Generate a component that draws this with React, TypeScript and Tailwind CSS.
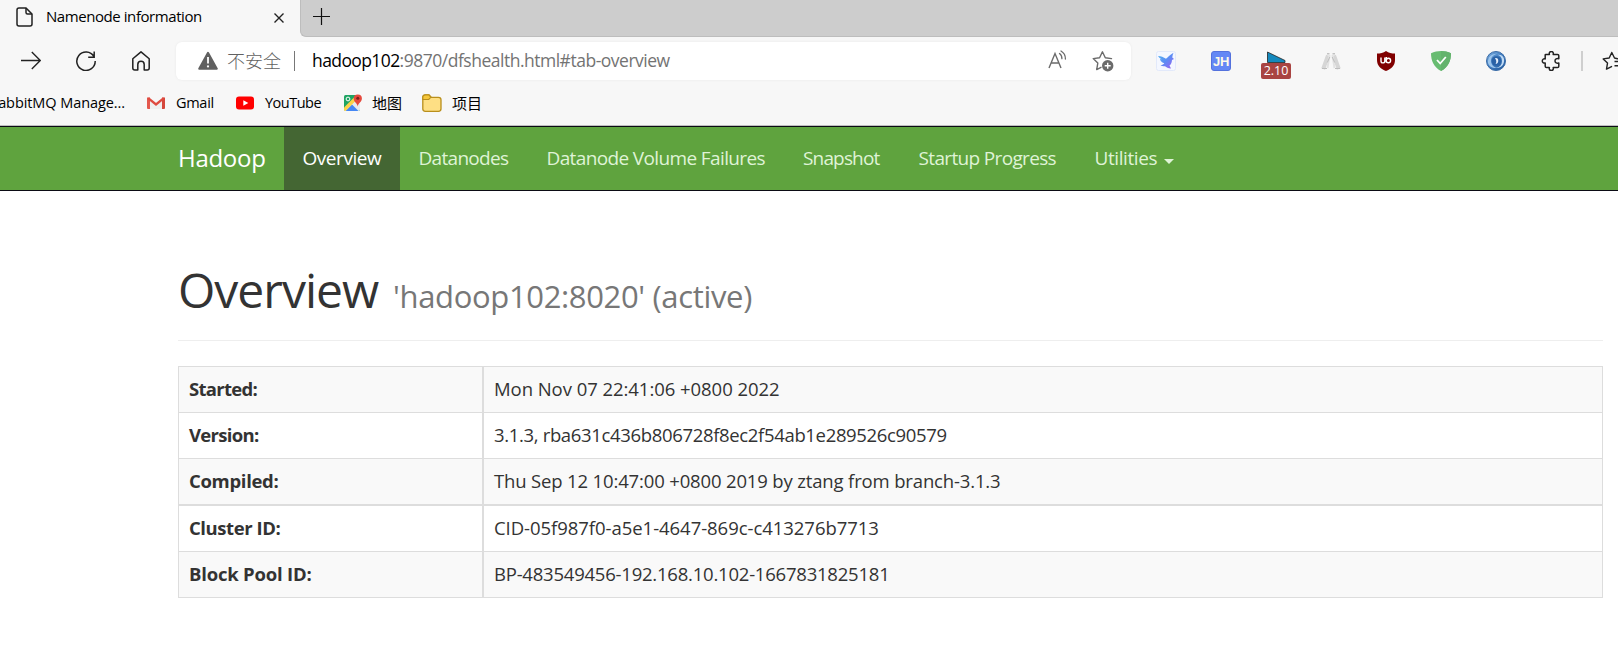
import type { ReactNode } from 'react';

function Icon({ size = 20, children, className = '' }: { size?: number; children: ReactNode; className?: string }) {
  return (
    <svg width={size} height={size} viewBox={`0 0 ${size} ${size}`} fill="none" className={`block shrink-0 ${className}`}>
      {children}
    </svg>
  );
}

function TabStrip() {
  return (
    <div className="flex h-[37px] bg-[#cdcdcd]">
      <div className="flex w-[300px] shrink-0 items-start bg-[#f7f7f7] pl-[15px]">
        <Icon size={20} className="mt-[7px]">
          <path d="M4 1h7l6 6v10a2 2 0 0 1-2 2H4a2 2 0 0 1-2-2V3a2 2 0 0 1 2-2Z" stroke="#222" strokeWidth="1.5" />
          <path d="M11 1v4.5A1.5 1.5 0 0 0 12.5 7H17" stroke="#222" strokeWidth="1.5" />
        </Icon>
        <span className="ml-[11px] w-[228px] text-[15px] leading-8 tracking-[-0.0288em] text-black">Namenode information</span>
        <Icon size={10} className="mt-[13px]">
          <path d="m.5.5 9 9m0-9-9 9" stroke="#222" strokeWidth="1.4" />
        </Icon>
      </div>
      <div className="flex-1 bg-[#f7f7f7]">
        <div className="flex h-full rounded-bl-md border-b border-l border-[#bdbdbd] bg-[#cdcdcd] pl-[12px] pt-[8px]">
          <Icon size={18}>
            <path d="M8.500 0v17M0 8.500h17" stroke="#111" strokeWidth="1.2" />
          </Icon>
        </div>
      </div>
    </div>
  );
}

function AddressBar() {
  return (
    <div className="flex h-[38px] w-[955px] shrink-0 items-center rounded-md bg-white pl-[22px] shadow-[0_0_3px_rgba(0,0,0,0.06)]">
      <Icon size={20}>
        <path d="M10 1.800 18.800 17.700H1.200Z" fill="#606060" stroke="#606060" strokeWidth="2" strokeLinejoin="round" />
        <path d="M10 6v6.500" stroke="#fff" strokeWidth="1.8" />
        <circle cx="10" cy="15.4" r="1.1" fill="#fff" />
      </Icon>
      <span className="ml-[9px] w-[54px] whitespace-nowrap text-[18px] font-light leading-[36px] text-[#616161]">不安全</span>
      <div className="ml-[13px] h-5 w-px bg-[#777]" />
      <div className="ml-[17px] flex flex-1 whitespace-nowrap pb-[2px] text-[17.5px] leading-[36px]">
        <span className="tracking-[-0.034em] text-black">hadoop102</span>
        <span className="tracking-[-0.028em] text-[#737373]">:9870/dfshealth.html#tab-overview</span>
      </div>
      <Icon size={20} className="mb-[2px]">
        <path d="m1 18 6-14.500L13 18M3 13h8" stroke="#6b6b6b" strokeWidth="1.4" />
        <path d="M11.500 3.500c1.700 1.200 2.500 3 2.400 5.200M13 1c3 1.800 4.500 4.500 4.400 8" stroke="#6b6b6b" strokeWidth="1.3" strokeLinecap="round" />
      </Icon>
      <Icon size={22} className="ml-[24px] mr-[17px]">
        <path d="M19.500 8.600 13.300 7.700 10.400 1.800 7.600 7.700 1.200 8.600l4.600 4.500-1.100 6.500 4.300-2.300" stroke="#6b6b6b" strokeWidth="1.4" strokeLinejoin="round" strokeLinecap="round" />
        <circle cx="15.7" cy="15.8" r="5.7" fill="#6b6b6b" />
        <path d="M15.700 12.800v6m-3-3h6" stroke="#fff" strokeWidth="1.4" />
      </Icon>
    </div>
  );
}

function Extensions() {
  return (
    <div className="ml-[25px] flex shrink-0 items-center gap-[35px]">
      <Icon>
        <defs>
          <linearGradient id="bird" x1="0" y1="0" x2="1" y2="1">
            <stop offset="0" stopColor="#4fb6ef" />
            <stop offset=".5" stopColor="#5c8cf4" />
            <stop offset="1" stopColor="#a25cf0" />
          </linearGradient>
        </defs>
        <rect x=".5" y=".5" width="19" height="19" rx="2" fill="#f4f7ff" stroke="#e2e9fa" />
        <path d="M2 5c3 .2 5.500 1 8 2.800C12 6 13.500 4.500 17.500 1.800c-.8 2-1 3.200-1.200 4.700L18 8l-2 1c-.2 3-1.200 4.500-2.500 5.500l1.500 3c-3-.3-4.500-1-6-2.300-1.700.2-3 0-4.500-.7 2-.6 3-1.300 3.800-2.200C5.500 11.500 4.500 10 4 8l2 .3C4 7.500 3 6.500 2 5Z" fill="url(#bird)" />
      </Icon>
      <div className="flex h-5 w-5 items-center justify-center rounded-[3px] border border-[#5472dd] bg-[#6488f5] font-['Liberation_Sans'] text-[13px] font-bold leading-none tracking-[-0.02em] text-[#fffbe8]">
        JH
      </div>
      <div className="relative h-5 w-5">
        <Icon>
          <path d="M1.500 1 19 9.500v2h-17.500Z" fill="#1489bd" stroke="#222" strokeWidth=".8" />
        </Icon>
        <span className="absolute -left-[5px] top-3 flex h-4 w-[30px] items-center justify-center rounded-[2px] bg-[#a94442] text-[12.5px] leading-4 text-white">2.10</span>
      </div>
      <Icon>
        <path d="M7 4.500 2.200 18M13 4.500 17.800 18" stroke="#d6d6d6" strokeWidth="4" />
        <path d="M8.500 4 6.500 17M11.500 4l2 13" stroke="#e2e2e2" strokeWidth="2" />
        <path d="m8.800 6-2.500 5.500M11.200 6l2.500 5.500M1 17.500h5M14 17.500h5" stroke="#bdbdbd" strokeWidth="1" />
        <path d="M6 2.800h2.500M11.500 2.800H14" stroke="#c3c3c3" strokeWidth="1.5" />
      </Icon>
      <Icon>
        <path d="M10 0c2.700 1.900 5.700 2.600 9 2.600V9c0 6-4 9-9 11-5-2-9-5-9-11V2.600C4.300 2.600 7.300 1.900 10 0Z" fill="#800000" />
        <path d="M5 6.500v3.500a1.900 1.900 0 0 0 3.800 0v-3.500M10.300 6v5.400" stroke="#fff" strokeWidth="1.4" />
        <circle cx="12.400" cy="9.500" r="2.200" stroke="#fff" strokeWidth="1.4" />
      </Icon>
      <Icon>
        <path d="M10 0c3 0 7 .8 10 2.300 0 7-2.500 14-10 17.700C2.500 16.300 0 9.300 0 2.300 3 .8 7 0 10 0Z" fill="#68bc71" />
        <path d="M10 0c3 0 7 .8 10 2.300 0 7-2.500 14-10 17.700Z" fill="#64b36d" />
        <path d="m6 9 3.200 3.500L14.800 6" stroke="#fff" strokeWidth="1.8" />
      </Icon>
      <Icon>
        <defs>
          <linearGradient id="orb" x1="0" y1="0" x2="1" y2="1">
            <stop offset="0" stopColor="#7fb0e0" />
            <stop offset=".5" stopColor="#3f7cc0" />
            <stop offset="1" stopColor="#1f5596" />
          </linearGradient>
        </defs>
        <circle cx="10" cy="10" r="9.500" fill="url(#orb)" stroke="#3a6ba6" />
        <path d="M2 12C1.500 5.500 6 2 12 2.800 7.500 3.500 5 6 5 9.500c0 4 2.500 6.500 6 7.500C6.500 17.500 3 15.500 2 12Z" fill="#9cc5ec" />
        <path d="M18 8c.8 5.500-3 9.500-8 9 4-1 6-3.500 6-7 0-3.500-2-5.500-4.500-6.200C15 3.500 17.500 5 18 8Z" fill="#c2dcf5" />
        <circle cx="10.300" cy="10" r="4.800" fill="#2a62a6" />
        <path d="M9 7.200c2.500-.6 3.600 1 3.200 3.300-.3 1.500-1.200 2.300-2.600 2.400C10.700 11 10.500 9 9 7.200Z" fill="#e4eefb" />
      </Icon>
      <Icon>
        <path
          d="M4.500 3.500h3.900c-.5-1.800.4-2.900 1.900-2.900s2.400 1.100 1.900 2.900H16.500a1.300 1.300 0 0 1 1.300 1.300V7.800c-2-.6-3.800.3-3.800 2.100s1.800 2.700 3.800 2.100v3.300a1.300 1.300 0 0 1-1.300 1.300h-4.300c.5 1.800-.4 2.900-1.900 2.900s-2.400-1.100-1.900-2.900H5.500a1.300 1.300 0 0 1-1.300-1.300V12c-1.800.4-2.900-.5-2.900-2s1.100-2.500 2.900-2.100V3.800Z"
          stroke="#222"
          strokeWidth="1.5"
          strokeLinejoin="round"
        />
      </Icon>
    </div>
  );
}

function Toolbar() {
  return (
    <div className="flex h-12 items-center overflow-hidden bg-[#f7f7f7]">
      <Icon size={20} className="ml-[21px]">
        <path d="M0 9.500h19.300M10.800 1l8.500 8.500-8.500 8.500" stroke="#222" strokeWidth="1.4" />
      </Icon>
      <Icon size={20} className="ml-[35px]">
        <path d="M17.900 5.500A9.200 9.200 0 1 0 19.200 10M18.200.500v5.700h-6" stroke="#222" strokeWidth="1.5" />
      </Icon>
      <Icon size={20} className="ml-[35px]">
        <path d="M10 .9 18.200 7.800V17a2 2 0 0 1-2 2h-3v-5.500a3.200 3.200 0 0 0-6.400 0V19h-3a2 2 0 0 1-2-2V7.800Z" stroke="#222" strokeWidth="1.5" strokeLinejoin="round" />
      </Icon>
      <div className="w-[25px] shrink-0" />
      <AddressBar />
      <Extensions />
      <div className="ml-5 h-5 w-[2px] shrink-0 bg-[#cfcfcf]" />
      <Icon size={20} className="ml-[19px]">
        <path d="M15.500 7.700 12.500 7 9.800 1.500 7.200 7l-6 .9 4.300 4.200-1 6L9.500 15.600" stroke="#222" strokeWidth="1.4" strokeLinejoin="round" strokeLinecap="round" />
        <path d="M12.500 10.500H20M12.500 14.800H20" stroke="#222" strokeWidth="1.4" />
      </Icon>
    </div>
  );
}

function Bookmarks() {
  return (
    <div className="flex h-[41px] items-center overflow-hidden whitespace-nowrap border-b border-[#bfbfbf] bg-[#f7f7f7] pb-[5px] text-[14.5px] leading-8 text-black">
      <div className="flex w-[125px] shrink-0 justify-end">
        <span className="tracking-[-0.0055em]">abbitMQ Manage...</span>
      </div>
      <Icon size={18} className="ml-[22px]">
        <path d="M0 3.500h3V15H1a1 1 0 0 1-1-1Z" fill="#e4584d" />
        <path d="M15 3.500h3V14a1 1 0 0 1-1 1h-2Z" fill="#d5473c" />
        <path d="M3 5v10h12V5L9 10.500Z" fill="#efefef" />
        <path d="M1.200 4.200 9 10.500l7.800-6.300" stroke="#df4b40" strokeWidth="2.3" />
      </Icon>
      <span className="ml-[11px] w-[40px] tracking-[-0.0204em]">Gmail</span>
      <Icon size={20} className="ml-[20px]">
        <rect x="0" y="3.5" width="18" height="13" rx="3" fill="#f00" />
        <path d="m7.300 7.300 5 2.700-5 2.700Z" fill="#fff" />
      </Icon>
      <span className="ml-[9px] w-[58px] tracking-[-0.0342em]">YouTube</span>
      <Icon size={19} className="ml-[21px]">
        <rect y="2" width="16" height="16" rx="1.5" fill="#1fa463" />
        <path d="M0 16.500 15 3l1 1v12.500a1.500 1.500 0 0 1-1.500 1.500h-13A1.500 1.500 0 0 1 0 16.500Z" fill="#e8eaed" />
        <path d="M1.500 18 8 11.500l6.500 6.500Z" fill="#4587f4" />
        <path d="M0 14.500 11.500 3l2.500 2.500L1.500 18A1.500 1.500 0 0 1 0 16.500Z" fill="#fcd34a" />
        <circle cx="4" cy="6" r="1.9" stroke="#fff" strokeWidth="1" />
        <path d="M13.700 13.500c-.5-3.500-4-4.500-4-8a4.100 4.100 0 0 1 8.200 0c0 3.500-3.700 4.500-4.200 8Z" fill="#e5493d" />
        <circle cx="13.8" cy="5.2" r="1.5" fill="#7d231c" />
      </Icon>
      <span className="ml-[9px] w-[30px] text-[15px]">地图</span>
      <Icon size={20} className="ml-[20px]">
        <path d="M.8 4.300A2.500 2.500 0 0 1 3.300 1.800h3.600l2.300 2.500h7.300A2.500 2.500 0 0 1 19 6.800v9a2.500 2.500 0 0 1-2.500 2.500H3.300A2.500 2.500 0 0 1 .8 15.800Z" fill="#fedf84" stroke="#b98f1c" strokeWidth="1.3" />
        <path d="M.8 4.300A2.500 2.500 0 0 1 3.300 1.800h3.600l2 2.500-2.200 2.200H.8Z" fill="#f6c73b" stroke="#b98f1c" strokeWidth="1.2" />
      </Icon>
      <span className="ml-[10px] w-[30px] text-[15px]">项目</span>
    </div>
  );
}

function NavBar() {
  return (
    <nav className="flex h-[65px] whitespace-nowrap border-y border-[#0b0b14] bg-[#5fa33e] text-[19px] leading-[62px] text-[#dff3d6]">
      <a className="ml-[177px] w-[107px] pl-[1px] text-[24px] leading-[61px] tracking-[-0.012em] text-white">Hadoop</a>
      <a className="w-[116px] bg-[#446633] pl-[18.500px] tracking-[-0.0238em] text-white">Overview</a>
      <a className="w-[127px] pl-[18.500px] tracking-[-0.0365em]">Datanodes</a>
      <a className="w-[257px] pl-[19.500px] tracking-[-0.033em]">Datanode Volume Failures</a>
      <a className="w-[115px] pl-[19px] tracking-[-0.0443em]">Snapshot</a>
      <a className="w-[177px] pl-[19.500px] tracking-[-0.0345em]">Startup Progress</a>
      <a className="flex items-start pl-[18.500px] tracking-[-0.0214em]">
        Utilities
        <svg width="10" height="5" viewBox="0 0 10 5" className="ml-[7px] mt-[32px]">
          <path d="M0 0h10L5 5Z" fill="#dff3d6" />
        </svg>
      </a>
    </nav>
  );
}

const rows = [
  { label: 'Started:', value: 'Mon Nov 07 22:41:06 +0800 2022', row: 'h-[46px] bg-[#f9f9f9]', l: 'tracking-[-0.0383em]', v: 'tracking-[-0.0026em]' },
  { label: 'Version:', value: '3.1.3, rba631c436b806728f8ec2f54ab1e289526c90579', row: 'h-[46px]', l: 'tracking-[-0.0371em]', v: 'tracking-[-0.0184em]' },
  { label: 'Compiled:', value: 'Thu Sep 12 10:47:00 +0800 2019 by ztang from branch-3.1.3', row: 'h-[47px] border-b-2 bg-[#f9f9f9]', l: 'tracking-[-0.0172em]', v: 'tracking-[-0.0083em]' },
  { label: 'Cluster ID:', value: 'CID-05f987f0-a5e1-4647-869c-c413276b7713', row: 'h-[46px]', l: 'tracking-[-0.0231em]', v: 'tracking-[-0.0024em]' },
  { label: 'Block Pool ID:', value: 'BP-483549456-192.168.10.102-1667831825181', row: 'h-[46px] bg-[#f9f9f9]', l: 'tracking-[-0.0109em]', v: 'tracking-[-0.012em]' },
];

function Overview() {
  return (
    <main className="ml-[178px] w-[1425px] pt-[73px] text-[#333]">
      <h1 className="flex h-[77px] items-baseline whitespace-nowrap border-b border-[#eee] text-[48px] leading-[52px] tracking-[-0.0206em]">
        <span className="w-[215px]">Overview</span>
        <small className="text-[31px] tracking-[-0.011em] text-[#777]">'hadoop102:8020' (active)</small>
      </h1>
      <div className="mt-[25px] border border-b-0 border-[#ddd] text-[18.5px] leading-[43px]">
        {rows.map((r) => (
          <div key={r.label} className={`flex whitespace-nowrap border-b border-[#ddd] ${r.row}`}>
            <div className={`w-[305px] shrink-0 border-r-2 border-[#ddd] pl-[10px] font-bold ${r.l}`}>{r.label}</div>
            <div className={`pl-[10px] ${r.v}`}>{r.value}</div>
          </div>
        ))}
      </div>
    </main>
  );
}

export default function App() {
  return (
    <div className="h-[647px] w-[1618px] overflow-hidden bg-white font-['Open_Sans','Noto_Sans_CJK_SC',sans-serif]">
      <TabStrip />
      <Toolbar />
      <Bookmarks />
      <NavBar />
      <Overview />
    </div>
  );
}
